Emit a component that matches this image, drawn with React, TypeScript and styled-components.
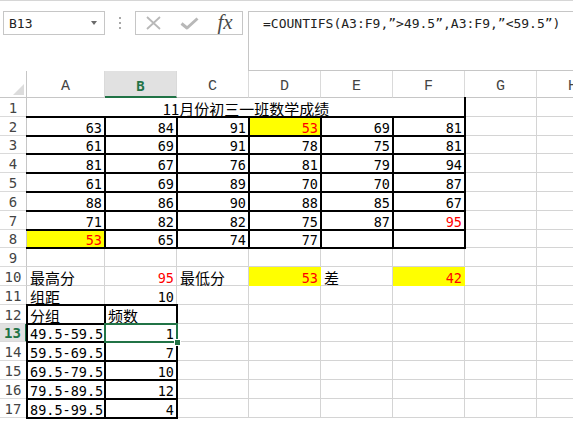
import React from "react";
import styled, { createGlobalStyle, css } from "styled-components";

const MONO = `"DejaVu Sans Mono", "Noto Sans CJK SC", monospace`;
const CJK = `"Noto Sans CJK SC", "Noto Sans", sans-serif`;
const GREEN = "#217346";
const GRID = "#d4d4d4";

const GlobalStyle = createGlobalStyle`
  html, body {
    margin: 0;
    padding: 0;
    background: #fff;
    overflow: hidden;
  }
  body {
    font-family: ${MONO};
  }
`;

const Window = styled.div`
  width: 573px;
  height: 421px;
  overflow: hidden;
  border-top: 1px solid #d6d6d6;
  box-sizing: border-box;
`;

/* ---------- formula bar ---------- */

const FormulaBar = styled.div`
  display: flex;
  align-items: flex-start;
  height: 70px;
  padding-top: 10px;
  box-sizing: border-box;
`;

const NameBox = styled.div`
  box-sizing: border-box;
  width: 102px;
  height: 24px;
  margin-left: 3px;
  border: 1px solid #c6c6c6;
  padding: 0 7px 0 5px;
  display: flex;
  align-items: center;
  justify-content: space-between;
  font-size: 13px;
  color: #222;
`;

const DropArrow = styled.span`
  width: 0;
  height: 0;
  border-left: 3.5px solid transparent;
  border-right: 3.5px solid transparent;
  border-top: 4px solid #6a6a6a;
`;

const Dots = styled.div`
  height: 24px;
  margin-left: 14px;
  display: flex;
  flex-direction: column;
  justify-content: center;
  gap: 3px;

  & span {
    width: 2px;
    height: 2px;
    background: #a8a8a8;
  }
`;

const IconBox = styled.div`
  box-sizing: border-box;
  width: 108px;
  height: 24px;
  margin-left: 14px;
  border: 1px solid #c6c6c6;
  display: grid;
  grid-template-columns: 34px 38px 34px;
  align-items: center;
  justify-items: center;
`;

const Fx = styled.span`
  font-family: "Liberation Serif", "DejaVu Serif", serif;
  font-style: italic;
  font-size: 21px;
  line-height: 1;
  color: #4a4a4a;
  margin-top: -2px;
`;

const FormulaBox = styled.div`
  box-sizing: border-box;
  flex: 1;
  height: 60px;
  margin-left: 5px;
  border: 1px solid #c6c6c6;
  border-right: none;
  padding: 4px 0 0 14px;
  font-size: 13px;
  line-height: 16px;
  color: #222;
  white-space: nowrap;
`;

/* ---------- sheet ---------- */

const Sheet = styled.div`
  display: grid;
  width: max-content;
  grid-template-columns: 27px 78px repeat(7, 72px);
  grid-template-rows: 27px repeat(17, 18.8px);
`;

const Corner = styled.div`
  box-sizing: border-box;
  border-right: 1px solid #c6c6c6;
  border-bottom: 1px solid #c6c6c6;
  display: flex;
  align-items: flex-end;
  justify-content: flex-end;
  padding: 0 2px 2px 0;

  &::before {
    content: "";
    width: 0;
    height: 0;
    border-left: 11px solid transparent;
    border-bottom: 11px solid #dcdcdc;
  }
`;

const ColHeader = styled.div<{ $active?: boolean }>`
  box-sizing: border-box;
  display: flex;
  align-items: flex-end;
  justify-content: center;
  padding-bottom: 2px;
  border-right: 1px solid #dadada;
  border-bottom: ${(p) => (p.$active ? `2px solid ${GREEN}` : "1px solid #c6c6c6")};
  background: ${(p) => (p.$active ? "#e1e1e1" : "#fff")};
  color: ${(p) => (p.$active ? GREEN : "#444")};
  font-family: ${(p) => (p.$active ? MONO : `"Liberation Mono", monospace`)};
  font-weight: ${(p) => (p.$active ? 700 : 400)};
  font-size: ${(p) => (p.$active ? "14px" : "15px")};
  line-height: 16px;
`;

const RowHeader = styled.div<{ $active?: boolean }>`
  box-sizing: border-box;
  display: flex;
  align-items: flex-end;
  justify-content: center;
  border-right: ${(p) => (p.$active ? `2px solid ${GREEN}` : "1px solid #c6c6c6")};
  border-bottom: 1px solid #dadada;
  background: ${(p) => (p.$active ? "#e1e1e1" : "#fff")};
  color: ${(p) => (p.$active ? GREEN : "#444")};
  font-weight: ${(p) => (p.$active ? 700 : 400)};
  font-size: 14px;
  line-height: 16px;
`;

type CellProps = {
  $span?: number;
  $align?: "left" | "right" | "center";
  $cjk?: boolean;
  $red?: boolean;
  $yellow?: boolean;
  $t?: boolean;
  $r?: boolean;
  $b?: boolean;
  $l?: boolean;
};

const thick = "2px solid #000";

const Cell = styled.div<CellProps>`
  position: relative;
  box-sizing: border-box;
  display: flex;
  align-items: flex-end;
  justify-content: ${(p) =>
    p.$align === "right" ? "flex-end" : p.$align === "center" ? "center" : "flex-start"};
  grid-column: span ${(p) => p.$span ?? 1};
  padding: 0 2px 0 3px;
  border-right: 1px solid ${(p) => (p.$yellow ? "#ffff00" : GRID)};
  border-bottom: 1px solid ${(p) => (p.$yellow ? "#ffff00" : GRID)};
  background: ${(p) => (p.$yellow ? "#ffff00" : "#fff")};
  color: ${(p) => (p.$red ? "#ff0000" : "#000")};
  font-family: ${(p) => (p.$cjk ? CJK : MONO)};
  font-size: ${(p) => (p.$cjk ? "15px" : "13.5px")};
  line-height: ${(p) => (p.$cjk ? "15px" : "14px")};
  white-space: nowrap;

  ${(p) =>
    (p.$t || p.$r || p.$b || p.$l) &&
    css`
      &::after {
        content: "";
        position: absolute;
        z-index: 1;
        pointer-events: none;
        top: -1px;
        left: -1px;
        right: -2px;
        bottom: -2px;
        border-top: ${p.$t ? thick : "none"};
        border-right: ${p.$r ? thick : "none"};
        border-bottom: ${p.$b ? thick : "none"};
        border-left: ${p.$l ? thick : "none"};
      }
    `}
`;

const Selection = styled.span`
  position: absolute;
  z-index: 2;
  top: -1px;
  left: -1px;
  right: -2px;
  bottom: -2px;
  border: 2px solid ${GREEN};
`;

const FillHandle = styled.span`
  position: absolute;
  right: -5px;
  bottom: -5px;
  width: 5px;
  height: 5px;
  background: ${GREEN};
  border: 1px solid #fff;
`;

/* ---------- data ---------- */

type Spec = {
  v?: string;
  cjk?: boolean;
  align?: "left" | "right" | "center";
  red?: boolean;
  yellow?: boolean;
  span?: number;
  t?: boolean;
  r?: boolean;
  b?: boolean;
  l?: boolean;
  selected?: boolean;
};

const COLS = ["A", "B", "C", "D", "E", "F", "G", "H"];

const scores: (number | null)[][] = [
  [63, 84, 91, 53, 69, 81],
  [61, 69, 91, 78, 75, 81],
  [81, 67, 76, 81, 79, 94],
  [61, 69, 89, 70, 70, 87],
  [88, 86, 90, 88, 85, 67],
  [71, 82, 82, 75, 87, 95],
  [53, 65, 74, 77, null, null],
];

const marked: Record<string, { red?: boolean; yellow?: boolean }> = {
  "0-3": { red: true, yellow: true },
  "5-5": { red: true },
  "6-0": { red: true, yellow: true },
};

const empty = (n: number): Spec[] => Array.from({ length: n }, () => ({}));

const groups = [
  ["49.5-59.5", "1"],
  ["59.5-69.5", "7"],
  ["69.5-79.5", "10"],
  ["79.5-89.5", "12"],
  ["89.5-99.5", "4"],
];

const rows: Spec[][] = [
  [
    { v: "11月份初三一班数学成绩", cjk: true, align: "center", span: 6, r: true, b: true },
    ...empty(2),
  ],
  ...scores.map((line, ri) => [
    ...line.map((n, ci) => ({
      v: n === null ? undefined : String(n),
      align: "right" as const,
      r: true,
      b: true,
      ...marked[`${ri}-${ci}`],
    })),
    ...empty(2),
  ]),
  empty(8),
  [
    { v: "最高分", cjk: true },
    { v: "95", align: "right", red: true },
    { v: "最低分", cjk: true },
    { v: "53", align: "right", red: true, yellow: true },
    { v: "差", cjk: true },
    { v: "42", align: "right", red: true, yellow: true },
    ...empty(2),
  ],
  [{ v: "组距", cjk: true }, { v: "10", align: "right" }, ...empty(6)],
  [
    { v: "分组", cjk: true, t: true, l: true, r: true, b: true },
    { v: "频数", cjk: true, t: true, r: true, b: true },
    ...empty(6),
  ],
  ...groups.map(([range, count], i) => [
    { v: range, l: true, r: true, b: true },
    { v: count, align: "right" as const, r: true, b: true, selected: i === 0 },
    ...empty(6),
  ]),
];

export default function App() {
  return (
    <Window>
      <GlobalStyle />
      <FormulaBar>
        <NameBox>
          <span>B13</span>
          <DropArrow />
        </NameBox>
        <Dots>
          <span />
          <span />
          <span />
        </Dots>
        <IconBox>
          <svg width="17" height="14" viewBox="0 0 17 14">
            <path d="M2 1 L15 13 M15 1 L2 13" stroke="#b8b8b8" strokeWidth="1.8" fill="none" />
          </svg>
          <svg width="19" height="13" viewBox="0 0 19 13">
            <path
              d="M1.5 6.5 L7 11 L17.5 1.5"
              stroke="#b8b8b8"
              strokeWidth="3"
              fill="none"
              strokeLinejoin="round"
            />
          </svg>
          <Fx>fx</Fx>
        </IconBox>
        <FormulaBox>=COUNTIFS(A3:F9,”&gt;49.5”,A3:F9,”&lt;59.5”)</FormulaBox>
      </FormulaBar>

      <Sheet>
        <Corner />
        {COLS.map((c) => (
          <ColHeader key={c} $active={c === "B"}>
            {c}
          </ColHeader>
        ))}
        {rows.map((line, ri) => (
          <React.Fragment key={ri}>
            <RowHeader $active={ri === 12}>{ri + 1}</RowHeader>
            {line.map((s, ci) => (
              <Cell
                key={ci}
                $span={s.span}
                $align={s.align}
                $cjk={s.cjk}
                $red={s.red}
                $yellow={s.yellow}
                $t={s.t}
                $r={s.r}
                $b={s.b}
                $l={s.l}
              >
                {s.v}
                {s.selected && (
                  <Selection>
                    <FillHandle />
                  </Selection>
                )}
              </Cell>
            ))}
          </React.Fragment>
        ))}
      </Sheet>
    </Window>
  );
}
